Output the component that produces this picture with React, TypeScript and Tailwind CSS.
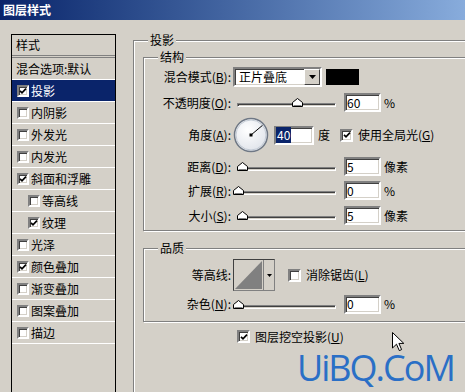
import type { ReactNode } from "react"

const STYLE_ITEMS = [
  { label: "投影", checked: true, selected: true },
  { label: "内阴影" },
  { label: "外发光" },
  { label: "内发光" },
  { label: "斜面和浮雕", checked: true },
  { label: "等高线", indent: true },
  { label: "纹理", checked: true, indent: true },
  { label: "光泽" },
  { label: "颜色叠加", checked: true },
  { label: "渐变叠加" },
  { label: "图案叠加" },
  { label: "描边" },
] as const

const SUNKEN =
  "border-2 border-t-[#808080] border-l-[#808080] border-r-white border-b-white shadow-[inset_1px_1px_0_#404040,inset_-1px_-1px_0_#d4d0c8]"

const GROUP =
  "border border-[#808080] shadow-[inset_1px_1px_0_#fff,1px_1px_0_#fff]"

export default function App() {
  return (
    <div className="relative h-[392px] w-[465px] overflow-hidden bg-[#d4d0c8] font-['Noto_Sans_CJK_SC',sans-serif] text-[12px] leading-[16px] text-black">
      <div className="flex h-[20px] items-center bg-linear-to-r from-[#0a246a] to-[#88acdc] pl-[3px] text-[12px] font-bold text-white">
        图层样式
      </div>

      <div className="flex items-start">
        <StyleList />

        <fieldset className={`ml-[17px] mt-[12px] h-[400px] w-[345px] shrink-0 pl-[9px] ${GROUP}`}>
          <legend className="ml-[5px] bg-[#d4d0c8] px-[2px]">投影</legend>

          <fieldset className={`mt-[1px] w-[326px] pb-[5px] ${GROUP}`}>
            <legend className="ml-[14px] bg-[#d4d0c8] px-[2px]">结构</legend>
            <div className="pt-[2px]">
              <Row label={<>混合模式(<u>B</u>):</>} className="h-[20px]">
                <BlendSelect />
                <div className="ml-[4px] h-[16px] w-[33px] bg-black" />
              </Row>
              <Row label={<>不透明度(<u>O</u>):</>} className="mt-[6px] h-[19px]">
                <SliderField pct={60} value="60" unit="%" />
              </Row>
              <Row label={<>角度(<u>A</u>):</>} className="mt-[5px] h-[36px]">
                <AngleDial />
                <div className={`ml-[5px] flex h-[19px] w-[40px] items-center bg-white ${SUNKEN}`}>
                  <span className="bg-[#0a246a] px-px text-white">40</span>
                </div>
                <span className="ml-[4px]">度</span>
                <CheckBox checked className="ml-[10px]" />
                <span className="ml-[5px]">
                  使用全局光(<u>G</u>)
                </span>
              </Row>
              <Row label={<>距离(<u>D</u>):</>} className="mt-[4px] h-[19px]">
                <SliderField pct={4} value="5" unit="像素" />
              </Row>
              <Row label={<>扩展(<u>R</u>):</>} className="mt-[5px] h-[19px]">
                <SliderField pct={0} value="0" unit="%" />
              </Row>
              <Row label={<>大小(<u>S</u>):</>} className="mt-[6px] h-[19px]">
                <SliderField pct={4} value="5" unit="像素" />
              </Row>
            </div>
          </fieldset>

          <fieldset className={`mt-[9px] w-[326px] pb-[7px] ${GROUP}`}>
            <legend className="ml-[14px] bg-[#d4d0c8] px-[2px]">品质</legend>
            <Row label="等高线:" className="mt-[3px] h-[32px]">
              <ContourPicker />
              <CheckBox className="ml-[13px]" />
              <span className="ml-[5px]">
                消除锯齿(<u>L</u>)
              </span>
            </Row>
            <Row label={<>杂色(<u>N</u>):</>} className="mt-[3px] h-[20px]">
              <SliderField pct={0} value="0" unit="%" />
            </Row>
          </fieldset>

          <div className="ml-[94px] mt-[8px] flex h-[13px] items-center">
            <CheckBox checked />
            <span className="ml-[5px]">
              图层挖空投影(<u>U</u>)
            </span>
          </div>
        </fieldset>
      </div>

      <Cursor />

      <div className="absolute left-[297px] top-[350px] font-['Open_Sans',sans-serif] text-[36px] leading-none font-medium tracking-[-2px] text-[#2a6fc6]">
        UiBQ.CoM
      </div>
    </div>
  )
}

function StyleList() {
  return (
    <div className="ml-[11px] mt-[14px] h-[400px] w-[105px] shrink-0 border border-black">
      <div className="flex h-[23px] items-center border-b-[3px] border-double border-[#808080] pl-[4px]">
        样式
      </div>
      <div className="flex h-[22px] items-center border-b border-white pl-[4px]">
        混合选项:默认
      </div>
      {STYLE_ITEMS.map((item) => (
        <div
          key={item.label}
          className={`flex h-[22px] items-center gap-[2px] border-b border-white ${
            "indent" in item ? "pl-[16px]" : "pl-[5px]"
          } ${"selected" in item ? "bg-[#0a246a] text-white" : ""}`}
        >
          <CheckBox checked={"checked" in item} small />
          <span>{item.label}</span>
        </div>
      ))}
    </div>
  )
}

function Row({
  label,
  className,
  children,
}: {
  label: ReactNode
  className: string
  children: ReactNode
}) {
  return (
    <div className={`flex items-center ${className}`}>
      <div className="w-[87px] shrink-0 text-right">{label}</div>
      <div className="ml-[2px] flex items-center">{children}</div>
    </div>
  )
}

function CheckBox({
  checked = false,
  small = false,
  className = "",
}: {
  checked?: boolean
  small?: boolean
  className?: string
}) {
  return (
    <div
      className={`flex shrink-0 items-center justify-center bg-white ${
        small ? "size-[12px]" : "size-[13px]"
      } ${SUNKEN} ${className}`}
    >
      {checked && (
        <svg width="8" height="8" viewBox="0 0 8 8">
          <path d="M1 3.8 L3 5.8 L7 1.6" fill="none" stroke="#000" strokeWidth="1.7" />
        </svg>
      )}
    </div>
  )
}

function BlendSelect() {
  return (
    <div className={`flex h-[20px] w-[89px] bg-white ${SUNKEN}`}>
      <span className="flex-1 pl-[4px] leading-[16px]">正片叠底</span>
      <div className="flex w-[16px] items-center justify-center border border-t-white border-l-white border-r-[#404040] border-b-[#404040] bg-[#d4d0c8]">
        <svg width="7" height="4" viewBox="0 0 7 4">
          <path d="M0 0 H7 L3.5 4 Z" fill="#000" />
        </svg>
      </div>
    </div>
  )
}

function SliderField({
  pct,
  value,
  unit,
}: {
  pct: number
  value: string
  unit: string
}) {
  return (
    <>
      <div className="relative ml-[4px] flex h-[9px] w-[99px] items-end">
        <div className="h-[4px] w-full border border-t-[#808080] border-l-[#808080] border-r-white border-b-white shadow-[inset_1px_1px_0_#404040]" />
        <svg
          className="absolute bottom-0"
          style={{ left: `calc(${pct}% - 4px)` }}
          width="11"
          height="9"
          viewBox="0 0 11 9"
        >
          <path d="M0.5 8.5 V4.5 L5.5 0.5 L10.5 4.5 V8.5 Z" fill="#fff" stroke="#000" />
          <path d="M1.5 7.5 H9.5" stroke="#808080" />
        </svg>
      </div>
      <div className={`ml-[8px] flex h-[19px] w-[37px] items-center bg-white pl-px ${SUNKEN}`}>
        {value}
      </div>
      <span className="ml-[3px]">{unit}</span>
    </>
  )
}

function AngleDial() {
  const rad = (40 * Math.PI) / 180
  const x = 18 + 15 * Math.cos(rad)
  const y = 18 - 15 * Math.sin(rad)

  return (
    <svg width="36" height="36" viewBox="0 0 36 36">
      <defs>
        <radialGradient id="dial" cx="0.4" cy="0.35" r="0.7">
          <stop offset="0" stopColor="#ffffff" />
          <stop offset="1" stopColor="#dfe3ea" />
        </radialGradient>
      </defs>
      <circle cx="18" cy="18" r="16.5" fill="url(#dial)" stroke="#6f7885" strokeWidth="1.5" />
      <circle cx="18" cy="18" r="15" fill="none" stroke="#b9c1cd" strokeWidth="0.8" />
      <line x1="18" y1="18" x2={x} y2={y} stroke="#000" strokeWidth="1" />
      <rect x="16.5" y="16.5" width="3" height="3" fill="#000" />
    </svg>
  )
}

function ContourPicker() {
  return (
    <div className="flex h-[32px] w-[42px] border border-t-[#404040] border-l-[#404040] border-r-[#808080] border-b-[#808080] bg-[#d4d0c8]">
      <svg width="29" height="30" viewBox="0 0 29 30">
        <path d="M1 29 L28 1 V29 Z" fill="#808080" />
      </svg>
      <div className="flex w-[11px] items-center justify-center border-l border-[#808080]">
        <svg width="5" height="3" viewBox="0 0 5 3">
          <path d="M0 0 H5 L2.5 3 Z" fill="#000" />
        </svg>
      </div>
    </div>
  )
}

function Cursor() {
  return (
    <svg
      className="absolute left-[392px] top-[332px]"
      width="13"
      height="20"
      viewBox="0 0 13 20"
    >
      <path
        d="M0.5 0.5 V16 L4.5 12.2 L7.3 18.6 L9.6 17.6 L6.9 11.4 H11.8 Z"
        fill="#fff"
        stroke="#000"
      />
    </svg>
  )
}
